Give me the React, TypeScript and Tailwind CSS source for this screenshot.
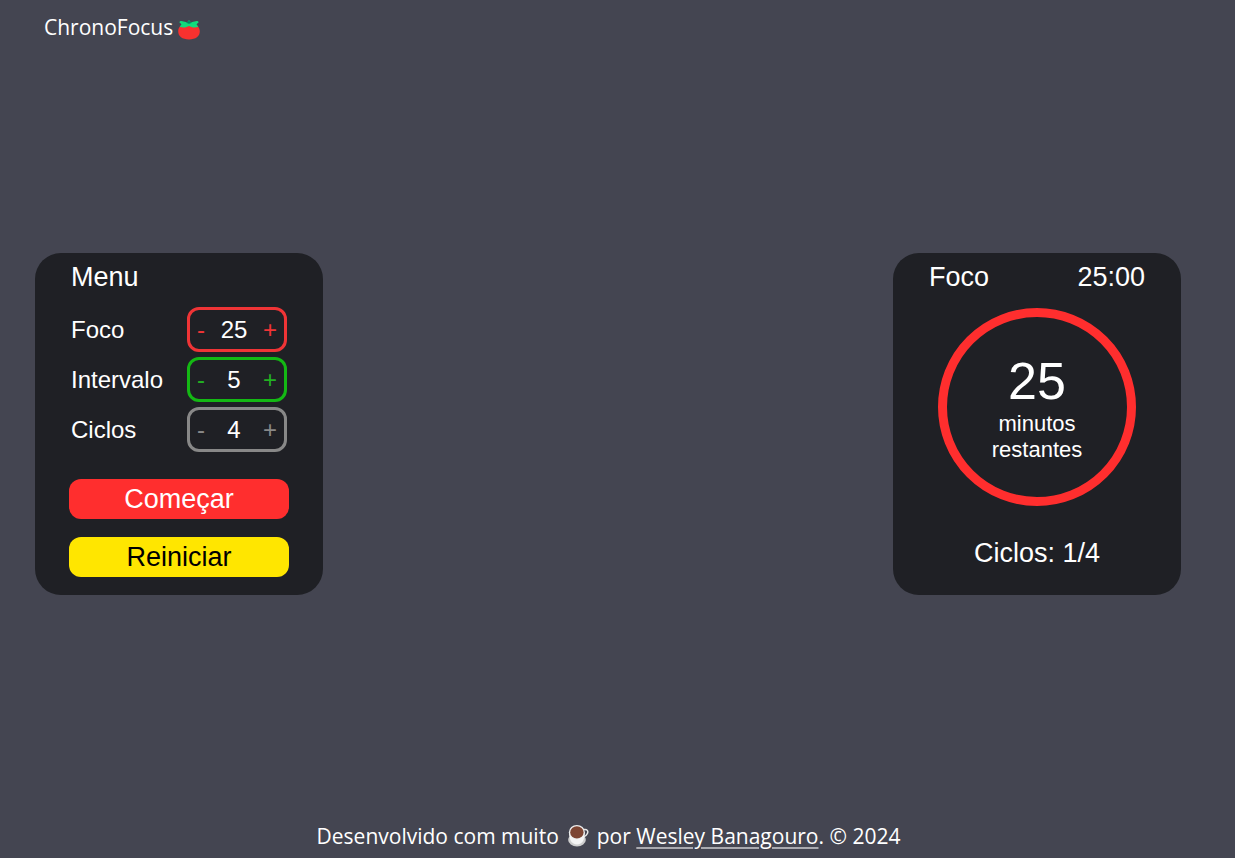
import { useState } from "react";

function Tomato() {
  return (
    <svg viewBox="0 0 24 20" className="mt-1 h-5 w-6" role="img" aria-label="Tomate">
      <path
        d="M12 4.500c6.500-1.500 10.800 1.800 10.800 6.800 0 5-4 8.200-10.800 8.200S1.200 16.300 1.200 11.300c0-5 4.300-8.300 10.800-6.800z"
        fill="#f8312f"
      />
      <path
        d="M10.800 1.200c0-1 2.400-1 2.400 0v1.400L19.500 1c1.600 0 2.300.7 2 1.400l-2 1.800 1.800 2.600c-2.300 1-4.800 1-6.800.2L12 6 9.500 7c-2 .8-4.500.8-6.800-.2l1.800-2.600-2-1.800C2.200 1.700 2.900 1 4.500 1l6.300 1.600z"
        fill="#12dc7c"
      />
      <path d="M8.800 2.800L12 3.800l3.200-1L12.800 2V.8h-1.600V2z" fill="#008463" />
    </svg>
  );
}

function Coffee() {
  return (
    <svg viewBox="0 0 22 24" className="h-6 w-[22px]" role="img" aria-label="Café">
      <ellipse cx="10" cy="16" rx="8.800" ry="6.500" fill="#cfcfcf" />
      <path
        d="M17 5.500c3.200-.6 4.500 1.500 3.400 4-.8 1.900-2.400 3.200-4.400 3.800"
        fill="none"
        stroke="#e6e6e6"
        strokeWidth="1.500"
      />
      <path d="M2 8.500c0 7 2.600 12 8 12s7.800-5 7.800-12z" fill="#f4f4f4" />
      <ellipse cx="9.900" cy="8.200" rx="8" ry="7.200" fill="#eeeeee" />
      <ellipse cx="9.900" cy="8.400" rx="6.700" ry="6.100" fill="#7d4533" />
    </svg>
  );
}

type StepperProps = {
  id: string;
  label: string;
  value: number;
  tone: string;
  onChange: (value: number) => void;
};

function Stepper({ id, label, value, tone, onChange }: StepperProps) {
  return (
    <div className="flex items-center justify-between text-2xl">
      <label htmlFor={id}>{label}</label>
      <div
        className={`flex h-[45px] w-[100px] items-center justify-between rounded-xl border-3 px-[7px] ${tone}`}
      >
        <button
          type="button"
          aria-label={`Diminuir ${label}`}
          onClick={() => onChange(Math.max(1, value - 1))}
        >
          -
        </button>
        <output id={id} className="text-white">
          {value}
        </output>
        <button type="button" aria-label={`Aumentar ${label}`} onClick={() => onChange(value + 1)}>
          +
        </button>
      </div>
    </div>
  );
}

export default function App() {
  const [focus, setFocus] = useState(25);
  const [rest, setRest] = useState(5);
  const [cycles, setCycles] = useState(4);

  return (
    <div className="flex min-h-screen flex-col bg-[#444551] font-['Liberation_Sans',Arial,sans-serif] text-white">
      <header className="flex h-14 items-center gap-1 px-11 font-['Open_Sans','Noto_Sans',sans-serif] text-[21px]">
        <h1>ChronoFocus</h1>
        <Tomato />
      </header>

      <main className="flex flex-1 items-center justify-between gap-8 pr-[54px] pl-[35px]">
        <section className="flex h-[342px] w-72 flex-col rounded-[26px] bg-[#1f2025] px-9 pt-2">
          <h2 className="text-[27px] leading-8">Menu</h2>
          <div className="mt-[14px] flex flex-col gap-[5px]">
            <Stepper id="foco" label="Foco" value={focus} tone="border-[#ef3436] text-[#ef3436]" onChange={setFocus} />
            <Stepper id="intervalo" label="Intervalo" value={rest} tone="border-[#14b814] text-[#22b022]" onChange={setRest} />
            <Stepper id="ciclos" label="Ciclos" value={cycles} tone="border-[#888888] text-[#888888]" onChange={setCycles} />
          </div>
          <div className="-mx-0.5 mt-[27px] flex flex-col gap-[18px] text-[27px]">
            <button type="button" className="h-10 rounded-xl bg-[#ff2e2e] leading-10">
              Começar
            </button>
            <button type="button" className="h-10 rounded-xl bg-[#ffe600] leading-10 text-black">
              Reiniciar
            </button>
          </div>
        </section>

        <section className="flex h-[342px] w-72 flex-col items-center rounded-[26px] bg-[#1f2025] px-9 pt-2 text-[27px] leading-8">
          <div className="flex w-full justify-between">
            <h2>Foco</h2>
            <span>{focus}:00</span>
          </div>
          <div className="mt-[15px] flex size-[198px] flex-col items-center justify-center rounded-full border-9 border-[#ff2e2e] text-center">
            <span className="text-[52px] leading-[60px]">{focus}</span>
            <span className="text-[22px] leading-[26px]">
              minutos
              <br />
              restantes
            </span>
          </div>
          <p className="mt-[31px]">Ciclos: 1/{cycles}</p>
        </section>
      </main>

      <footer className="flex h-[66px] items-end justify-center pr-[18px] pb-2 font-['Open_Sans','Noto_Sans',sans-serif] text-[21px] leading-7">
        <p className="flex items-center gap-2">
          <span>Desenvolvido com muito</span>
          <Coffee />
          <span>
            por{" "}
            <a href="#" className="underline decoration-[#aaaab0] decoration-2 underline-offset-3">
              Wesley Banagouro
            </a>
            . © 2024
          </span>
        </p>
      </footer>
    </div>
  );
}
